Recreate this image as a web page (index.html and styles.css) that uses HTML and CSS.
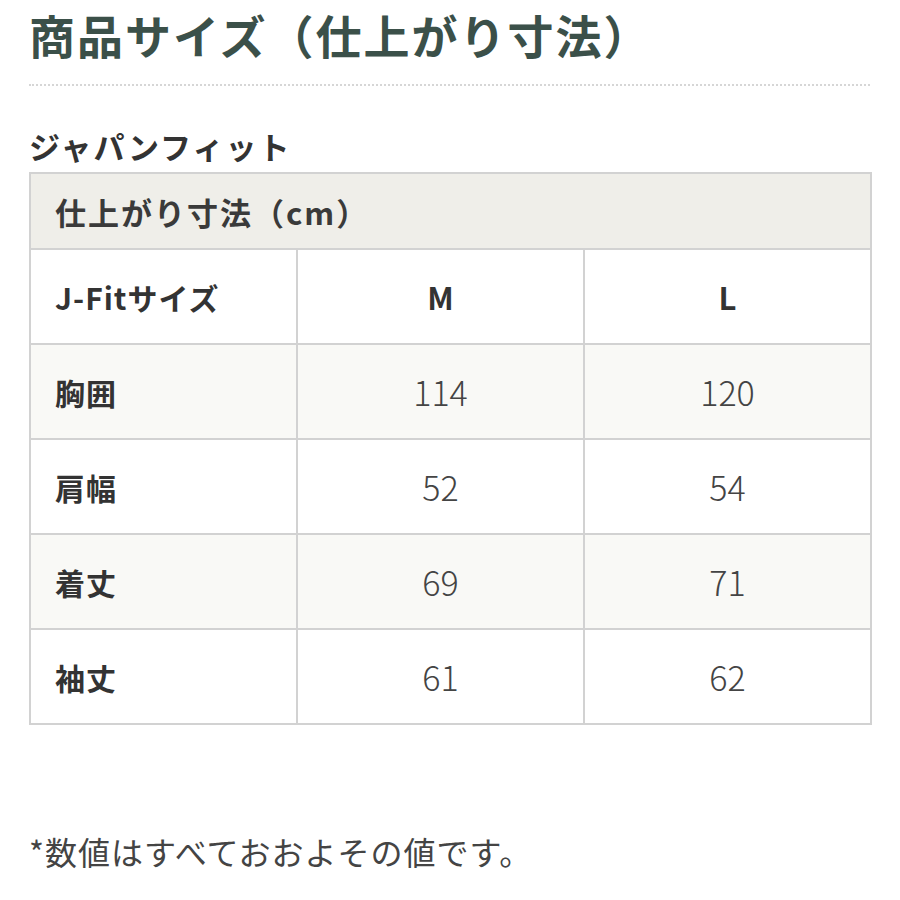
FILE: index.html
```html
<!DOCTYPE html>
<html lang="ja">
<head>
<meta charset="utf-8">
<title>商品サイズ</title>
<link rel="stylesheet" href="styles.css">
</head>
<body>
<div class="page">
  <h1 class="title">商品サイズ（仕上がり寸法）</h1>
  <hr class="divider">
  <h2 class="subtitle">ジャパンフィット</h2>
  <table class="size-table">
    <colgroup>
      <col class="c1"><col class="c2"><col class="c3">
    </colgroup>
    <thead>
      <tr class="head-row"><th colspan="3">仕上がり寸法（cm）</th></tr>
    </thead>
    <tbody>
      <tr><th>J-Fitサイズ</th><td class="size">M</td><td class="size">L</td></tr>
      <tr class="alt"><th>胸囲</th><td>114</td><td>120</td></tr>
      <tr><th>肩幅</th><td>52</td><td>54</td></tr>
      <tr class="alt"><th>着丈</th><td>69</td><td>71</td></tr>
      <tr><th>袖丈</th><td>61</td><td>62</td></tr>
    </tbody>
  </table>
  <p class="note">*数値はすべておおよその値です。</p>
</div>
</body>
</html>
```

FILE: styles.css
```css
html, body {
  margin: 0;
  padding: 0;
  background: #ffffff;
}
body {
  font-family: "Noto Sans CJK JP", "Noto Sans", sans-serif;
  color: #333333;
}
.page {
  padding: 0 30px 0 29px;
}
.title {
  margin: 0;
  font-size: 46px;
  line-height: 68px;
  font-weight: 700;
  color: #3b5049;
  letter-spacing: 2px;
}
.divider {
  margin: 16px 0 0 0;
  border: 0;
  border-top: 2px dotted #d6d6d6;
  height: 0;
}
.subtitle {
  margin: 40px 0 6px 0;
  font-size: 31px;
  line-height: 40px;
  font-weight: 700;
  color: #333333;
  letter-spacing: 2px;
}
.size-table {
  width: 841px;
  border-collapse: collapse;
  table-layout: fixed;
  border: 2px solid #d2d2d2;
}
.c1 { width: 267px; }
.c2 { width: 287px; }
.c3 { width: 287px; }
.size-table th,
.size-table td {
  border: 2px solid #d2d2d2;
  padding: 0;
}
.head-row th {
  height: 74px;
  background: #efeee9;
  text-align: left;
  padding-left: 24px;
  font-size: 31px;
  font-weight: 700;
  color: #3a3a3a;
  letter-spacing: 2px;
}
.size-table tbody tr {
  height: 95px;
}
.size-table tbody th {
  text-align: left;
  padding-left: 24px;
  font-size: 30px;
  font-weight: 700;
  color: #333333;
  letter-spacing: 1px;
}
.size-table tbody td {
  text-align: center;
  font-size: 34px;
  font-weight: 300;
  color: #444444;
}
.size-table tbody td.size {
  font-weight: 700;
  font-size: 31px;
  color: #333333;
}
.size-table tr.alt {
  background: #f9f9f6;
}
.note {
  margin: 106px 0 0 0;
  font-size: 32px;
  line-height: 40px;
  color: #444444;
  letter-spacing: 1px;
}
```
